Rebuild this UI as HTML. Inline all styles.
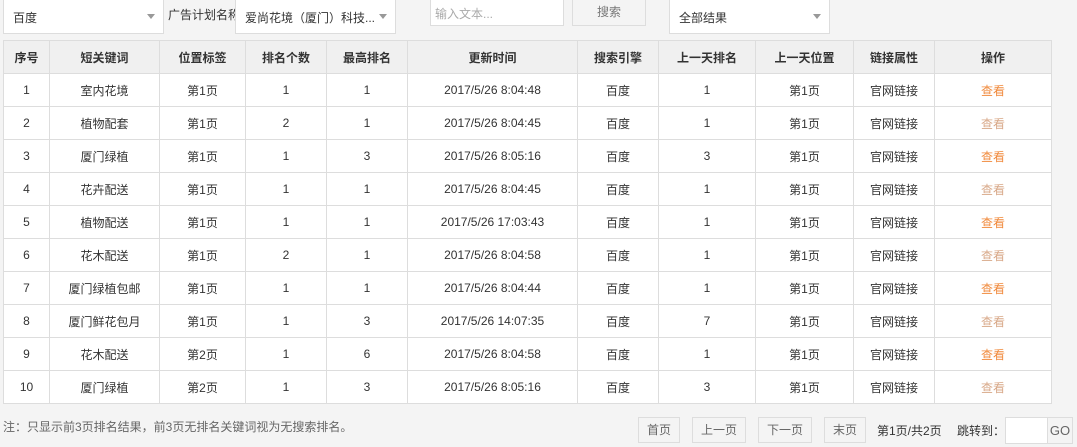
<!DOCTYPE html>
<html><head><meta charset="utf-8"><style>
body{margin:0;width:1077px;height:447px;background:#f4f4f4;font-family:"Liberation Sans","Noto Sans CJK SC",sans-serif;font-size:12px;color:#333;position:relative;overflow:hidden}
.a{position:absolute;box-sizing:border-box}
.sel{background:#fff;border:1px solid #ddd;border-top:none;height:34px;top:0;padding:9px 0 0 9px;font-size:12px}
.sel:after{content:"";position:absolute;right:8px;top:14px;border:4px solid transparent;border-top:5px solid #999}
table{position:absolute;left:3px;top:40px;border-collapse:collapse;width:1048px;table-layout:fixed}
td,th{border:1px solid #ddd;text-align:center;height:32px;padding:0;font-size:12px}
th{background:#f0f0f0;font-weight:bold;height:32px}
td{background:#fff}
.o{color:#f08a3c}.g{color:#d8a888}
.btn{top:417px;height:26px;border:1px solid #ddd;text-align:center;line-height:24px;color:#666}
</style></head><body>
<div class="a sel" style="left:3px;width:161px">百度</div>
<div class="a" style="left:168px;top:6px;width:67px;overflow:hidden;white-space:nowrap">广告计划名称</div>
<div class="a sel" style="left:235px;width:161px">爱尚花境（厦门）科技...</div>
<div class="a" style="left:430px;top:0;width:134px;height:26px;background:#fff;border:1px solid #ddd;border-top:none;color:#aaa;padding:5px 0 0 4px">输入文本...</div>
<div class="a" style="left:572px;top:0;width:74px;height:26px;border:1px solid #ddd;border-top:none;color:#777;text-align:center;line-height:24px">搜索</div>
<div class="a sel" style="left:669px;width:161px">全部结果</div>
<table>
<colgroup><col style="width:46px"><col style="width:110px"><col style="width:86px"><col style="width:81px"><col style="width:81px"><col style="width:170px"><col style="width:81px"><col style="width:97px"><col style="width:98px"><col style="width:81px"><col style="width:117px"></colgroup>
<tr><th>序号</th><th>短关键词</th><th>位置标签</th><th>排名个数</th><th>最高排名</th><th>更新时间</th><th>搜索引擎</th><th>上一天排名</th><th>上一天位置</th><th>链接属性</th><th>操作</th></tr>
<tr><td>1</td><td>室内花境</td><td>第1页</td><td>1</td><td>1</td><td>2017/5/26 8:04:48</td><td>百度</td><td>1</td><td>第1页</td><td>官网链接</td><td class="o">查看</td></tr>
<tr><td>2</td><td>植物配套</td><td>第1页</td><td>2</td><td>1</td><td>2017/5/26 8:04:45</td><td>百度</td><td>1</td><td>第1页</td><td>官网链接</td><td class="g">查看</td></tr>
<tr><td>3</td><td>厦门绿植</td><td>第1页</td><td>1</td><td>3</td><td>2017/5/26 8:05:16</td><td>百度</td><td>3</td><td>第1页</td><td>官网链接</td><td class="o">查看</td></tr>
<tr><td>4</td><td>花卉配送</td><td>第1页</td><td>1</td><td>1</td><td>2017/5/26 8:04:45</td><td>百度</td><td>1</td><td>第1页</td><td>官网链接</td><td class="g">查看</td></tr>
<tr><td>5</td><td>植物配送</td><td>第1页</td><td>1</td><td>1</td><td>2017/5/26 17:03:43</td><td>百度</td><td>1</td><td>第1页</td><td>官网链接</td><td class="o">查看</td></tr>
<tr><td>6</td><td>花木配送</td><td>第1页</td><td>2</td><td>1</td><td>2017/5/26 8:04:58</td><td>百度</td><td>1</td><td>第1页</td><td>官网链接</td><td class="g">查看</td></tr>
<tr><td>7</td><td>厦门绿植包邮</td><td>第1页</td><td>1</td><td>1</td><td>2017/5/26 8:04:44</td><td>百度</td><td>1</td><td>第1页</td><td>官网链接</td><td class="o">查看</td></tr>
<tr><td>8</td><td>厦门鲜花包月</td><td>第1页</td><td>1</td><td>3</td><td>2017/5/26 14:07:35</td><td>百度</td><td>7</td><td>第1页</td><td>官网链接</td><td class="g">查看</td></tr>
<tr><td>9</td><td>花木配送</td><td>第2页</td><td>1</td><td>6</td><td>2017/5/26 8:04:58</td><td>百度</td><td>1</td><td>第1页</td><td>官网链接</td><td class="o">查看</td></tr>
<tr><td>10</td><td>厦门绿植</td><td>第2页</td><td>1</td><td>3</td><td>2017/5/26 8:05:16</td><td>百度</td><td>3</td><td>第1页</td><td>官网链接</td><td class="g">查看</td></tr>
</table>
<div class="a" style="left:3px;top:418px;color:#666">注：只显示前3页排名结果，前3页无排名关键词视为无搜索排名。</div>
<div class="a btn" style="left:638px;width:42px">首页</div>
<div class="a btn" style="left:692px;width:54px">上一页</div>
<div class="a btn" style="left:758px;width:54px">下一页</div>
<div class="a btn" style="left:824px;width:42px">末页</div>
<div class="a" style="left:877px;top:422px">第1页/共2页</div>
<div class="a" style="left:957px;top:422px">跳转到：</div>
<div class="a" style="left:1005px;top:417px;width:43px;height:27px;background:#fff;border:1px solid #ddd"></div>
<div class="a" style="left:1047px;top:417px;width:26px;height:27px;border:1px solid #ddd;text-align:center;line-height:25px;color:#666;font-size:13px">GO</div>
</body></html>
